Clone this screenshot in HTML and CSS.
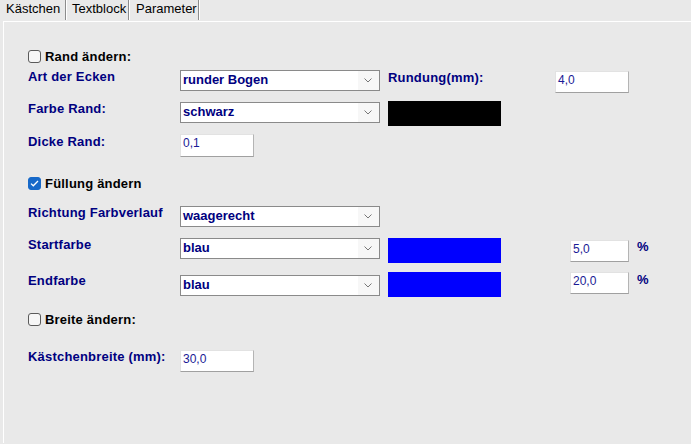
FILE: index.html
```html
<!DOCTYPE html>
<html lang="de">
<head>
<meta charset="utf-8">
<title>Kästchen</title>
<link rel="stylesheet" href="styles.css">
</head>
<body>
<div class="tabs">
  <div class="tab t1">Kästchen</div>
  <div class="tab t2">Textblock</div>
  <div class="tab t3">Parameter</div>
</div>
<div class="panel">
  <div class="form">
    <div class="check span r1"><span class="box"></span><span>Rand ändern:</span></div>

    <div class="label">Art der Ecken</div>
    <div class="select mt1"><span class="val">runder Bogen</span><span class="arrow"><svg width="8" height="5" viewBox="0 0 8 5"><path d="M0.5 0.5 L4 4 L7.5 0.5" fill="none" stroke="#777" stroke-width="1"/></svg></span></div>
    <div class="label mt1">Rundung(mm):</div>
    <div class="input w74 mt2">4,0</div>
    <div></div>

    <div class="label">Farbe Rand:</div>
    <div class="select mt1"><span class="val">schwarz</span><span class="arrow"><svg width="8" height="5" viewBox="0 0 8 5"><path d="M0.5 0.5 L4 4 L7.5 0.5" fill="none" stroke="#777" stroke-width="1"/></svg></span></div>
    <div class="swatch black"></div>
    <div></div><div></div>

    <div class="label">Dicke Rand:</div>
    <div class="input w74 h23">0,1</div>
    <div></div><div></div><div></div>

    <div class="check span"><span class="box on"><svg width="9" height="7" viewBox="0 0 9 7"><path d="M1 3.6 L3.3 5.8 L8 1" fill="none" stroke="#fff" stroke-width="1.3"/></svg></span><span>Füllung ändern</span></div>

    <div class="label">Richtung Farbverlauf</div>
    <div class="select mt1"><span class="val">waagerecht</span><span class="arrow"><svg width="8" height="5" viewBox="0 0 8 5"><path d="M0.5 0.5 L4 4 L7.5 0.5" fill="none" stroke="#777" stroke-width="1"/></svg></span></div>
    <div></div><div></div><div></div>

    <div class="label">Startfarbe</div>
    <div class="select mt1"><span class="val">blau</span><span class="arrow"><svg width="8" height="5" viewBox="0 0 8 5"><path d="M0.5 0.5 L4 4 L7.5 0.5" fill="none" stroke="#777" stroke-width="1"/></svg></span></div>
    <div class="swatch blue mt1"></div>
    <div class="input w59 mt3">5,0</div>
    <div class="pct mt2">%</div>

    <div class="label mt1">Endfarbe</div>
    <div class="select mt3"><span class="val">blau</span><span class="arrow"><svg width="8" height="5" viewBox="0 0 8 5"><path d="M0.5 0.5 L4 4 L7.5 0.5" fill="none" stroke="#777" stroke-width="1"/></svg></span></div>
    <div class="swatch blue"></div>
    <div class="input w59">20,0</div>
    <div class="pct">%</div>

    <div class="check span mt1"><span class="box"></span><span>Breite ändern:</span></div>

    <div class="label">Kästchenbreite (mm):</div>
    <div class="input w74 mt1">30,0</div>
    <div></div><div></div><div></div>
  </div>
</div>
</body>
</html>
```
FILE: styles.css
```css
html, body {
  margin: 0;
  padding: 0;
  background: #e9e9e9;
  font-family: "Liberation Sans", Arial, sans-serif;
  width: 691px;
  height: 444px;
  overflow: hidden;
}

.tabs {
  display: flex;
  height: 21px;
}

.tab {
  height: 20px;
  font-size: 13px;
  line-height: 15px;
  padding-top: 1px;
  box-sizing: border-box;
  color: #000;
  border-right: 1px solid #8c8c8c;
  box-shadow: 1px 0 0 #ffffff;
}

.t1 { width: 66px; padding-left: 6px; }
.t2 { width: 62px; padding-left: 5px; margin-left: 1px; }
.t3 { width: 69px; padding-left: 6px; margin-left: 1px; }

.panel {
  margin-left: 3px;
  border-top: 1px solid #ffffff;
  border-left: 1px solid #ffffff;
  height: 422px;
  padding: 28px 0 0 24px;
  box-sizing: border-box;
}

.form {
  display: grid;
  grid-template-columns: 152px 208px 167px 74px auto;
  grid-template-rows: 19px 32px 33px 43px 28px 32px 35px 40px 37px auto;
  align-items: start;
}

.span { grid-column: 1 / -1; }

.mt1 { margin-top: 1px; }
.mt2 { margin-top: 2px; }
.mt3 { margin-top: 3px; }

.check {
  display: flex;
  align-items: center;
  gap: 4px;
  height: 13px;
  font-size: 13px;
  font-weight: bold;
  color: #000;
  line-height: 13px;
  letter-spacing: 0.2px;
}

.box {
  width: 13px;
  height: 13px;
  box-sizing: border-box;
  border: 1px solid #5a5a5a;
  border-radius: 3px;
  background: #f6f6f6;
  display: flex;
  align-items: center;
  justify-content: center;
}

.box.on {
  background: #1769c9;
  border-color: #1769c9;
}

.label {
  font-size: 13px;
  font-weight: bold;
  color: #000080;
  line-height: 15px;
  letter-spacing: 0.2px;
  white-space: nowrap;
}

.select {
  width: 200px;
  height: 21px;
  box-sizing: border-box;
  border: 1px solid #8a8a8a;
  background: #fff;
  display: flex;
}

.select .val {
  flex: 1;
  padding-left: 2px;
  font-size: 13px;
  font-weight: bold;
  color: #000080;
  line-height: 17px;
}

.select .arrow {
  width: 20px;
  background: #f7f7f7;
  display: flex;
  align-items: center;
  justify-content: center;
  padding-right: 1px;
}

.input {
  height: 22px;
  box-sizing: border-box;
  background: #fff;
  border-top: 1px solid #e2e2e2;
  border-left: 1px solid #e2e2e2;
  border-right: 1px solid #b4b4b4;
  border-bottom: 1px solid #a0a0a0;
  padding: 1px 2px;
  font-size: 12px;
  line-height: 14px;
  color: #1a1a95;
  justify-self: start;
}

.w74 { width: 74px; }
.w59 { width: 59px; justify-self: end; }
.h23 { height: 23px; }

.swatch {
  width: 113px;
  height: 25px;
}

.black { background: #000; }
.blue { background: #0000ff; }

.pct {
  margin-left: 8px;
  font-size: 13px;
  font-weight: bold;
  color: #000080;
  line-height: 15px;
}
```
